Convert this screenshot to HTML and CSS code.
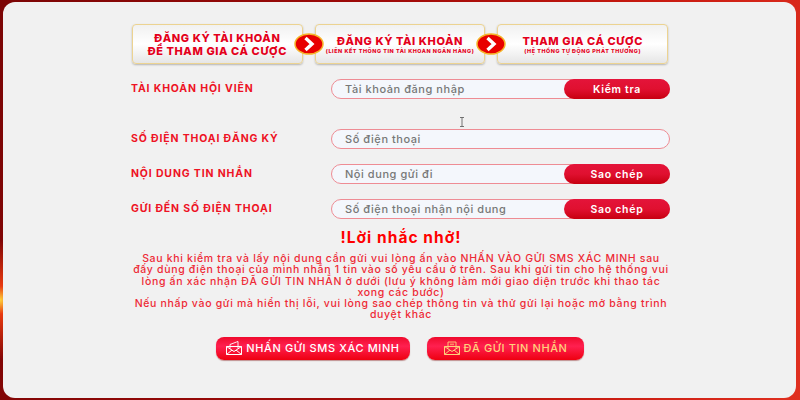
FILE: index.html
```html
<!DOCTYPE html>
<html lang="vi">
<head>
<meta charset="utf-8">
<title>Đăng ký tài khoản</title>
<link rel="stylesheet" href="styles.css">
</head>
<body>
<main class="panel">
  <div class="content">
    <nav class="steps">
      <div class="step">
        <div class="step-title big">ĐĂNG KÝ TÀI KHOẢN<br>ĐỂ THAM GIA CÁ CƯỢC</div>
      </div>
      <svg class="chevron" viewBox="0 0 30 22"><ellipse cx="15" cy="11" rx="14" ry="10" fill="#e80000" stroke="#f5b52a" stroke-width="1.5"/><path d="M11.5 5 L18 11 L11.5 17" fill="none" stroke="#fff" stroke-width="3.4"/></svg>
      <div class="step">
        <div class="step-title">ĐĂNG KÝ TÀI KHOẢN</div>
        <div class="step-sub">(LIÊN KẾT THÔNG TIN TÀI KHOẢN NGÂN HÀNG)</div>
      </div>
      <svg class="chevron" viewBox="0 0 30 22"><ellipse cx="15" cy="11" rx="14" ry="10" fill="#e80000" stroke="#f5b52a" stroke-width="1.5"/><path d="M11.5 5 L18 11 L11.5 17" fill="none" stroke="#fff" stroke-width="3.4"/></svg>
      <div class="step">
        <div class="step-title">THAM GIA CÁ CƯỢC</div>
        <div class="step-sub">(HỆ THỐNG TỰ ĐỘNG PHÁT THƯỞNG)</div>
      </div>
    </nav>

    <div class="row row-first">
      <div class="label">TÀI KHOẢN HỘI VIÊN</div>
      <div class="field"><span class="placeholder">Tài khoản đăng nhập</span><span class="pill">Kiểm tra</span></div>
    </div>
    <div class="row row-second">
      <div class="label">SỐ ĐIỆN THOẠI ĐĂNG KÝ</div>
      <div class="field"><span class="placeholder">Số điện thoại</span></div>
    </div>
    <div class="row">
      <div class="label">NỘI DUNG TIN NHẮN</div>
      <div class="field"><span class="placeholder">Nội dung gửi đi</span><span class="pill">Sao chép</span></div>
    </div>
    <div class="row">
      <div class="label">GỬI ĐẾN SỐ ĐIỆN THOẠI</div>
      <div class="field"><span class="placeholder">Số điện thoại nhận nội dung</span><span class="pill">Sao chép</span></div>
    </div>

    <h2 class="notice-title">!Lời nhắc nhở!</h2>
    <p class="notice">Sau khi kiểm tra và lấy nội dung cần gửi vui lòng ấn vào NHẤN VÀO GỬI SMS XÁC MINH sau đấy dùng điện thoại của mình nhắn 1 tin vào số yêu cầu ở trên. Sau khi gửi tin cho hệ thống vui lòng ấn xác nhận ĐÃ GỬI TIN NHẮN ở dưới (lưu ý không làm mới giao diện trước khi thao tác xong các bước)<br>Nếu nhấp vào gửi mà hiển thị lỗi, vui lòng sao chép thông tin và thử gửi lại hoặc mở bằng trình duyệt khác</p>

    <div class="actions">
      <div class="action action-send">
        <svg class="mail" viewBox="0 0 16 14" fill="none" stroke="#fff" stroke-width="1"><path d="M.5 5.5h15v8H.5z"/><path d="M.5 13.5l5.5-4.5M15.5 13.5L10 9M.5 5.5L8 10.5l7.5-5"/><path d="M4 7.5V3.5L10.5 1 12 .5V7.5" stroke-width=".9"/></svg>
        <span>NHẤN GỬI SMS XÁC MINH</span>
      </div>
      <div class="action action-done">
        <svg class="mail" viewBox="0 0 16 14" fill="none" stroke="#ffd27a" stroke-width="1"><path d="M.5 5.5h15v8H.5z"/><path d="M.5 13.5l5.5-4.5M15.5 13.5L10 9M.5 5.5L8 10.5l7.5-5"/><path d="M4 7.5V1h8v6.5M6 3.2h4M6 5.4h4" stroke-width=".9"/></svg>
        <span>ĐÃ GỬI TIN NHẮN</span>
      </div>
    </div>
  </div>
  <svg class="ibeam" viewBox="0 0 6 10" fill="none" stroke="#555" stroke-width=".8"><path d="M1 .5h4M3 .5v9M1 9.5h4"/></svg>
</main>
</body>
</html>
```

FILE: styles.css
```css
* { box-sizing: border-box; }
html, body { margin: 0; height: 100%; }
body {
  width: 800px;
  height: 400px;
  overflow: hidden;
  padding: 2px 4px 2px 3px;
  font-family: Inter, "Noto Sans", sans-serif;
  background:
    radial-gradient(circle at 0 300px, #ffd23a 0, #e83a10 14px, transparent 60px),
    linear-gradient(100deg, #7c0505 0%, #a00a08 45%, #c81a10 75%, #e03020 100%);
}
.panel {
  position: relative;
  height: 396px;
  background: #f1f1f1;
  border-radius: 12px;
  padding-top: 22px;
}
.content {
  width: 540px;
  margin-left: 128px;
}
.steps {
  display: flex;
  align-items: center;
  width: 536px;
  margin-left: 1px;
}
.step {
  flex: 1 1 0;
  height: 40px;
  padding-top: 2px;
  border: 1px solid #ecd391;
  border-radius: 4px;
  background: linear-gradient(180deg, #f1f1f1 0%, #ffffff 50%, #e6e6e6 100%);
  box-shadow: 0 1px 2px rgba(0,0,0,.25);
  display: flex;
  flex-direction: column;
  align-items: center;
  justify-content: center;
  text-align: center;
}
.step-title {
  color: #e4001b;
  font-size: 11px;
  font-weight: 800;
  line-height: 13px;
  letter-spacing: .6px;
}
.step-sub {
  color: #e4001b;
  font-size: 5.4px;
  font-weight: 800;
  line-height: 7px;
  letter-spacing: .55px;
}
.chevron {
  flex: none;
  width: 30px;
  height: 22px;
  margin: 0 -9px;
  position: relative;
  z-index: 1;
}
.row {
  display: flex;
  align-items: center;
  height: 20px;
  margin-top: 15px;
}
.row-second { margin-top: 30px; }
.label {
  width: 200px;
  padding-bottom: 2px;
  color: #ee1325;
  font-size: 10.5px;
  font-weight: 700;
  letter-spacing: .85px;
}
.field {
  flex: none;
  width: 339px;
  height: 20px;
  display: flex;
  align-items: center;
  justify-content: space-between;
  background: #f4f7fc;
  border: 1px solid #ee8c94;
  border-radius: 10px;
  padding-left: 13px;
}
.placeholder {
  color: #777;
  font-size: 11px;
  font-weight: 500;
  letter-spacing: .55px;
}
.pill {
  width: 106px;
  height: 20px;
  margin: -1px;
  border-radius: 10px;
  background: linear-gradient(180deg, #e4143a 0%, #e01030 50%, #c70010 100%);
  color: #fff;
  font-size: 10.5px;
  font-weight: 600;
  letter-spacing: .7px;
  display: flex;
  align-items: center;
  justify-content: center;
}
.notice-title {
  margin: 10px 0 0;
  color: #f00;
  font-size: 15.5px;
  line-height: 18px;
  font-weight: 700;
  letter-spacing: 1.05px;
  text-align: center;
}
.notice {
  margin: 6px 0 0;
  color: #ee2a36;
  font-size: 10.5px;
  font-weight: 500;
  line-height: 11.3px;
  letter-spacing: .68px;
  text-align: center;
}
.actions {
  display: flex;
  margin-top: 16px;
  margin-left: 85px;
  gap: 17px;
}
.action {
  height: 23px;
  border-radius: 8px;
  background: linear-gradient(180deg, #ef0a2c 0%, #ff2050 40%, #ee0010 100%);
  display: flex;
  align-items: center;
  justify-content: center;
  gap: 4px;
  font-size: 11px;
  font-weight: 500;
  letter-spacing: .6px;
  box-shadow: 0 1px 1px rgba(120,0,0,.4);
}
.action-send { width: 194px; color: #fff; }
.action-done { width: 157px; color: #ffd27a; }
.mail { width: 16px; height: 14px; flex: none; }
.ibeam {
  position: absolute;
  left: 456px;
  top: 115px;
  width: 6px;
  height: 10px;
}
```
